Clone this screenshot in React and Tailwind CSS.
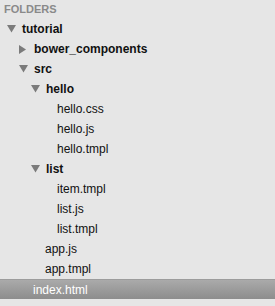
const tree = [
  { name: "tutorial", level: 0, folder: true, open: true },
  { name: "bower_components", level: 1, folder: true, open: false },
  { name: "src", level: 1, folder: true, open: true },
  { name: "hello", level: 2, folder: true, open: true },
  { name: "hello.css", level: 3 },
  { name: "hello.js", level: 3 },
  { name: "hello.tmpl", level: 3 },
  { name: "list", level: 2, folder: true, open: true },
  { name: "item.tmpl", level: 3 },
  { name: "list.js", level: 3 },
  { name: "list.tmpl", level: 3 },
  { name: "app.js", level: 2 },
  { name: "app.tmpl", level: 2 },
  { name: "index.html", level: 1, selected: true },
];

const Arrow = ({ open }) =>
  open ? (
    <svg width="9" height="8" viewBox="0 0 9 8" className="shrink-0">
      <polygon points="0,0 9,0 4.5,7.5" fill="#7b7b7b" />
    </svg>
  ) : (
    <svg width="8" height="9" viewBox="0 0 8 9" className="shrink-0">
      <polygon points="0,0 7,4.5 0,9" fill="#7b7b7b" />
    </svg>
  );

const Row = ({ item }) => {
  const pad = item.folder ? 7 + 12 * item.level : 9 + 12 * item.level;
  return (
    <div
      className={`flex items-center h-5 ${
        item.selected
          ? "bg-gradient-to-b from-[#aaaaaa] to-[#8d8d8d] border-t border-[#9c9c9c] text-white"
          : "text-[#111111]"
      }`}
      style={{ paddingLeft: pad }}
    >
      {item.folder && (
        <span className="w-[15px] flex items-center">
          <Arrow open={item.open} />
        </span>
      )}
      {!item.folder && <span className="w-3" />}
      <span className={item.folder ? "font-bold" : ""}>{item.name}</span>
    </div>
  );
};

export default function App() {
  return (
    <div
      className="w-[275px] h-[306px] bg-[#e6e6e6] overflow-hidden text-[12px] leading-none"
      style={{ fontFamily: '"Liberation Sans", Arial, sans-serif' }}
    >
      <div className="h-[19px] pl-[4px] pt-[4px] text-[11px] font-bold text-[#8a8a8a]">
        FOLDERS
      </div>
      {tree.map((item) => (
        <Row key={item.name} item={item} />
      ))}
    </div>
  );
}
